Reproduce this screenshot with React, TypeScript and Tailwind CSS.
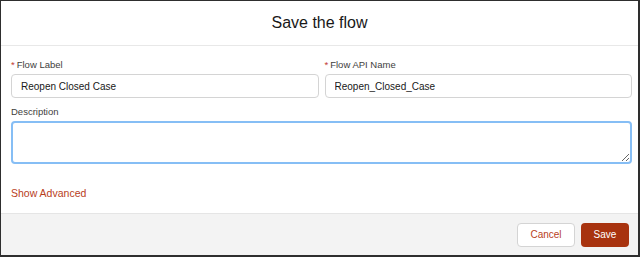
import React, { useState } from "react";

const Field: React.FC<{ label: string; value: string }> = ({ label, value }) => {
  const [text, setText] = useState<string>(value);
  return (
    <div className="flex flex-col">
      <label className="h-[14px] flex items-center text-[9.5px] text-[#3e3e3c] leading-none">
        <span className="text-[#c23934] mr-[2px]">*</span>
        {label}
      </label>
      <input
        value={text}
        onChange={(e) => setText(e.target.value)}
        className="mt-[2px] h-[24px] w-full rounded-[4px] border border-[#d4d4d4] bg-white px-[9px] text-[10px] text-[#181818] focus:outline-none"
      />
    </div>
  );
};

const App: React.FC = () => {
  const [description, setDescription] = useState<string>("");

  return (
    <div
      className="w-[640px] h-[257px] flex flex-col bg-white border-l border-t border-r-2 border-b-2 border-[#2e2e2e]"
      style={{ fontFamily: '"Liberation Sans", Arial, sans-serif' }}
    >
      <header className="h-[45px] shrink-0 flex items-center justify-center border-b border-[#e8e8e8]">
        <h1 className="text-[16px] text-[#181818]">Save the flow</h1>
      </header>

      <div className="flex-1 flex flex-col pl-[10px] pr-[6px] pt-[12px]">
        <div className="grid grid-cols-2 gap-[6px]">
          <Field label="Flow Label" value="Reopen Closed Case" />
          <Field label="Flow API Name" value="Reopen_Closed_Case" />
        </div>

        <label className="mt-[7px] h-[14px] flex items-center text-[9.5px] text-[#3e3e3c] leading-none">
          Description
        </label>
        <textarea
          value={description}
          onChange={(e) => setDescription(e.target.value)}
          className="mt-[2px] h-[43px] w-full resize-y rounded-[4px] border-2 border-[#86bef5] bg-white px-[8px] py-[4px] text-[10px] text-[#181818] focus:outline-none"
        />

        <button className="mt-[22px] self-start text-[10.5px] text-[#b8401c] leading-[14px]">
          Show Advanced
        </button>
      </div>

      <footer className="h-[42px] shrink-0 flex items-center justify-end gap-[6px] pr-[9px] bg-[#f3f3f3] border-t border-[#e5e5e5]">
        <button className="h-[24px] w-[58px] rounded-[4px] border border-[#d4d4d4] bg-white text-[10px] text-[#b8401c]">
          Cancel
        </button>
        <button className="h-[24px] w-[48px] rounded-[4px] bg-[#a8330f] text-[10px] text-white">
          Save
        </button>
      </footer>
    </div>
  );
};

export default App;
